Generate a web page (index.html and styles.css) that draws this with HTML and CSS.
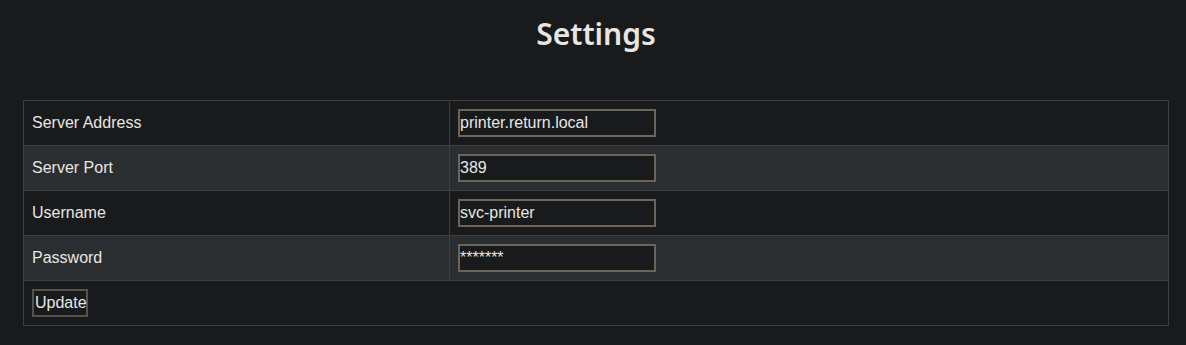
FILE: index.html
```html
<!DOCTYPE html>
<html lang="en">
<head>
    <meta charset="UTF-8">
    <meta name="viewport" content="width=device-width, initial-scale=1.0">
    <title>Settings</title>
    <link rel="stylesheet" href="styles.css">
</head>
<body>
    <h1>Settings</h1>

    <form class="settings" onsubmit="return false;">
        <table class="settings-table">
            <tr>
                <td class="label">Server Address</td>
                <td><input type="text" name="ip" value="printer.return.local"></td>
            </tr>
            <tr>
                <td class="label">Server Port</td>
                <td><input type="text" name="port" value="389"></td>
            </tr>
            <tr>
                <td class="label">Username</td>
                <td><input type="text" name="username" value="svc-printer"></td>
            </tr>
            <tr>
                <td class="label">Password</td>
                <td><input type="text" name="password" value="*******"></td>
            </tr>
            <tr>
                <td colspan="2"><button type="submit">Update</button></td>
            </tr>
        </table>
    </form>
</body>
</html>
```

FILE: styles.css
```css
body {
    margin: 8px;
    background-color: #181a1b;
    color: #e8e6e3;
    font-family: "Liberation Sans", Arial, sans-serif;
}
h1 {
    margin: 0;
    padding: 4px 0 0 6px;
    height: 88px;
    line-height: 44px;
    text-align: center;
    font-family: "Noto Sans", "Open Sans", sans-serif;
    font-weight: 600;
    font-size: 30px;
    color: #e8e6e3;
}
.settings {
    margin: 0 0 0 15px;
}
.settings-table {
    width: 1146px;
    border-collapse: collapse;
    font-size: 16px;
}
.settings-table td {
    border: 1px solid #3b3f41;
    padding: 8px;
    height: 28px;
    vertical-align: middle;
}
.settings-table td.label {
    width: 409px;
}
.settings-table tr:nth-child(even) td {
    background-color: #2b2e30;
}
input {
    box-sizing: border-box;
    width: 198px;
    height: 28px;
    margin: 0;
    padding: 0;
    border: 2px solid #6b645a;
    background-color: #181a1b;
    color: #e8e6e3;
    font-family: "Liberation Sans", Arial, sans-serif;
    font-size: 16px;
}
button {
    box-sizing: border-box;
    width: 56px;
    height: 28px;
    margin: 0;
    padding: 0 1px;
    border: 2px solid #57534c;
    background-color: #181a1b;
    color: #e8e6e3;
    font-family: "Liberation Sans", Arial, sans-serif;
    font-size: 16px;
    text-align: left;
}
```
